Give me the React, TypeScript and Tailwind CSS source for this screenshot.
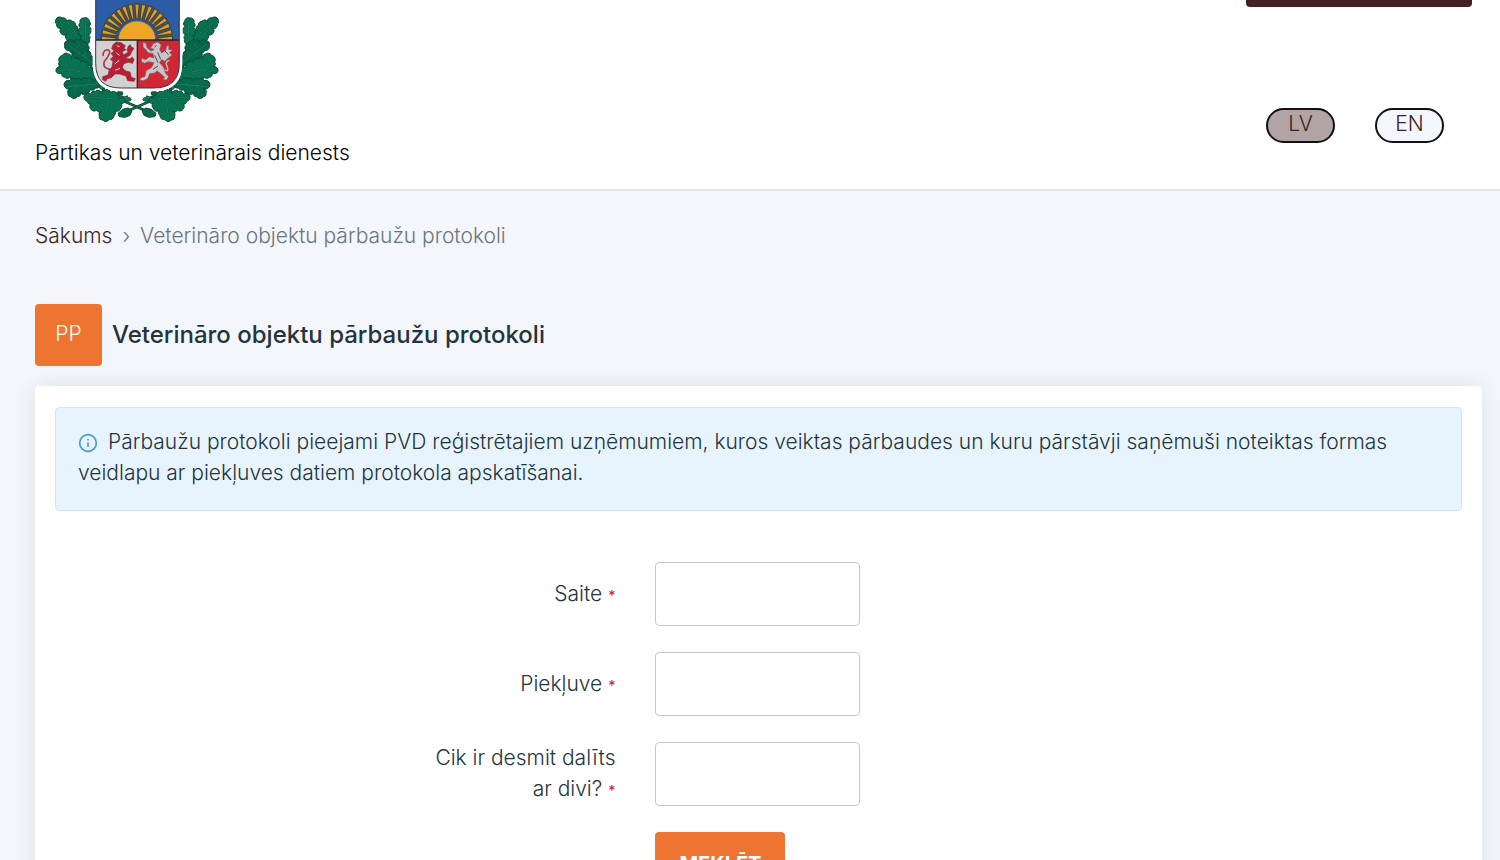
import { Info } from "lucide-react";

type Point = [number, number];

// Joins the notches of an oak leaf with outward bulging arcs
const leafPath = (points: Point[]) => {
  let d = `M${points[0][0]} ${points[0][1]}`;
  for (let i = 1; i <= points.length; i++) {
    const [x0, y0] = points[i - 1];
    const [x, y] = points[i % points.length];
    const r = Math.hypot(x - x0, y - y0) * 0.6;
    d += `A${r} ${r} 0 0 1 ${x} ${y}`;
  }
  return d + "Z";
};

const leaves: Point[][] = [
  [[50, 72], [48, 58], [66, 54], [80, 64], [96, 64], [106, 76], [112, 92], [126, 104], [132, 124], [110, 121], [92, 122], [78, 114], [80, 102], [62, 98], [64, 86]],
  [[120, 68], [132, 54], [148, 64], [146, 80], [152, 92], [144, 104], [148, 118], [140, 132], [126, 124], [126, 106], [116, 98], [122, 84]],
  [[74, 136], [84, 122], [102, 127], [116, 120], [130, 126], [144, 136], [142, 152], [152, 166], [158, 194], [138, 188], [122, 186], [110, 174], [98, 170], [100, 156], [88, 152]],
  [[48, 214], [62, 200], [58, 186], [68, 166], [84, 162], [94, 176], [108, 176], [122, 186], [134, 186], [144, 202], [158, 212], [166, 234], [148, 238], [132, 246], [116, 238], [100, 242], [92, 228], [74, 232], [66, 218]],
  [[72, 254], [90, 242], [108, 238], [124, 241], [140, 236], [158, 242], [180, 250], [166, 264], [150, 268], [138, 280], [122, 278], [112, 290], [92, 290], [84, 280], [92, 266]],
  [[134, 284], [152, 284], [166, 274], [184, 278], [196, 270], [212, 278], [228, 278], [238, 290], [256, 298], [242, 310], [242, 324], [224, 332], [222, 346], [208, 358], [188, 360], [178, 348], [186, 334], [170, 330], [152, 326], [154, 312], [142, 304]],
];

const leafFills = ["#08704f", "#087554", "#06664a", "#077451", "#086a4c", "#087351"];

const veins = [
  "M56 64L124 118M80 80L86 70M86 88L76 98M98 98L106 92",
  "M136 62L136 124M136 82L144 74M136 96L126 92",
  "M84 134L154 186M106 146L120 132M118 156L110 164M132 168L138 156",
  "M58 212Q100 202 160 228M82 208L76 180M104 208L108 190M92 208L82 220M126 214L132 198M116 212L118 229",
  "M82 260L172 252M105 258L116 248M110 259L102 280M138 256L148 248M134 258L130 268",
  "M146 292Q190 294 248 298M172 293L184 284M188 294L168 316M204 295L198 344M222 296L230 316",
];

const rays = Array.from({ length: 17 }, (_, i) => -88 + i * 11);

const WreathHalf = () => (
  <g>
    <path d="M137 115Q143 170 159 218Q178 278 246 301L344 344" fill="none" stroke="#0b4937" strokeWidth="8" strokeLinecap="round" />
    <path d="M137 115Q143 170 159 218Q178 278 246 301L344 344" fill="none" stroke="#1d7758" strokeWidth="3" />
    <path d="M306 332L318 324L334 328L348 340L344 350L326 352L312 346Z" fill="#086a4c" stroke="#0a4735" strokeWidth="3" strokeLinejoin="round" />
    {leaves.map((points, i) => (
      <g key={i}>
        <path d={leafPath(points)} fill={leafFills[i]} stroke="#0a4735" strokeWidth="3" />
        <path d={veins[i]} fill="none" stroke="#0b5541" strokeWidth="5" />
        <path d={veins[i]} fill="none" stroke="#1c9a70" strokeWidth="2" />
      </g>
    ))}
    <path d="M170 264L196 252M196 258L186 282M238 296L264 288M254 302L274 298" stroke="#0a5b43" strokeWidth="4" />
    <ellipse cx="184" cy="258" rx="6" ry="10" fill="#167954" stroke="#0a4735" strokeWidth="2" />
    <ellipse cx="240" cy="280" rx="9" ry="7" fill="#0b5f45" stroke="#0a4735" strokeWidth="2" />
    <ellipse cx="264" cy="298" rx="9" ry="6" fill="#167954" stroke="#0a4735" strokeWidth="2" />
  </g>
);

const Crest = () => (
  <svg viewBox="45 0 492 369" className="block w-[164px] h-[123px]" role="img" aria-label="Latvijas Republikas ģerbonis">
    <WreathHalf />
    <g transform="translate(582 0) scale(-1 1)">
      <WreathHalf />
    </g>

    {/* Shield */}
    <clipPath id="shield">
      <path d="M167 -10H418V190Q418 264 342 264H242Q167 264 167 190Z" />
    </clipPath>
    <path d="M158 -10H427V190Q427 274 342 274H242Q158 274 158 190Z" fill="#fff" />
    <g clipPath="url(#shield)">
      <rect x="160" y="-10" width="262" height="130" fill="#2b5ca8" />
      {rays.map((angle) => (
        <g key={angle} transform={`translate(291 119) rotate(${angle})`}>
          <path d="M-3 -62L-7 -107H7L3 -62Z" fill="#d99f28" stroke="#4a4530" strokeWidth="4" />
        </g>
      ))}
      <circle cx="291" cy="119" r="56" fill="#f0a625" stroke="#2b5ca8" strokeWidth="2" />
      <rect x="160" y="120" width="132" height="150" fill="#d2d0d1" />
      <rect x="292" y="120" width="130" height="150" fill="#d02636" />
      <path d="M160 120H422M292 120V270" stroke="#24232c" strokeWidth="4" />
    </g>
    <path d="M167 -10V190Q167 264 242 264H342Q418 264 418 190V-10" fill="none" stroke="#3a3540" strokeWidth="3" />

    {/* Lion */}
    <g fill="#b71f35" stroke="#8c2937" strokeWidth="2" strokeLinejoin="round">
      <path d="M212 208Q186 206 193 184Q204 173 209 158Q208 146 196 151Q187 158 190 168" fill="none" stroke="#b23b48" strokeWidth="5" />
      <path d="M219 134L229 126L243 128L256 137L252 145L258 149L246 155L251 165L264 157L261 150L265 138L271 134L274 141L282 145L276 153L271 165L256 175L270 177L277 171L282 179L278 190L265 187L251 191L247 203L257 213L270 216L274 232L286 236L282 244L263 242L258 228L239 222L225 222L214 233L202 236L197 244L188 239L188 230L204 225L207 212L216 201L219 184L211 178L220 169L213 160L223 153L215 146Z" />
      <path d="M230 137L239 140M229 159L239 166M224 192L238 181M225 211L240 205" fill="none" stroke="#ead4d5" strokeWidth="3" />
    </g>

    {/* Griffin */}
    <g fill="#c8c4c7" stroke="#725966" strokeWidth="2" strokeLinejoin="round">
      <path d="M365 205Q390 222 381 198Q373 186 388 181" fill="none" stroke="#c8c4c7" strokeWidth="4" />
      <path d="M331 145L341 130L354 126L364 135L359 148L365 159L378 150L379 139L387 136L386 148L397 150L389 158L397 165L388 172L374 184L365 179L359 188L371 202L376 218L386 230L380 240L369 239L374 232L363 222L352 213L342 220L329 221L324 235L311 242L299 241L303 233L315 229L318 212L334 203L342 188L325 185L313 190L303 184L306 175L317 179L328 170L342 174L339 161L324 158L316 147L309 141L309 127L318 130L321 143L333 153L343 148Z" />
      <path d="M349 136L344 142M353 157L362 178M344 166L354 188M375 153L385 164M339 208L354 198" fill="none" stroke="#594753" strokeWidth="3" />
    </g>
  </svg>
);

const fields = [
  { id: "saite", label: "Saite" },
  { id: "piekluve", label: "Piekļuve" },
  { id: "jautajums", label: "Cik ir desmit dalīts ar divi?" },
];

const App = () => {
  return (
    <div className="h-screen overflow-hidden bg-[#f3f6fb] font-['Inter',sans-serif] text-[21px] leading-[31px] font-light text-[#24343d]">
      <header className="flex justify-between border-b-2 border-[#e2e4e8] bg-white pb-[21px] pl-[35px] pr-7">
        <div>
          <div className="pl-5">
            <Crest />
          </div>
          <p className="mt-[14px] text-black">Pārtikas un veterinārais dienests</p>
        </div>
        <div className="flex flex-col items-end">
          <div className="h-[7px] w-[226px] rounded-b bg-[#411f23]" />
          <nav className="mt-[101px] mr-7 flex gap-10">
            <button className="h-[35px] w-[69px] rounded-full border-2 border-[#111] bg-[#b1a4a5] pb-1 leading-[27px] text-[#411f23]">LV</button>
            <button className="h-[35px] w-[69px] rounded-full border-2 border-[#111] bg-[#f3f6fb] pb-1 leading-[27px] text-[#411f23]">EN</button>
          </nav>
        </div>
      </header>

      <main className="pl-[35px] pr-[18px]">
        <nav className="mt-[29px] flex">
          <a href="#" className="text-[#411f23]">Sākums</a>
          <span className="mx-[10px] text-[#6c757d]">›</span>
          <span className="text-[#6c757d]">Veterināro objektu pārbaužu protokoli</span>
        </nav>

        <div className="mt-[53px] flex items-center gap-[10px]">
          <div className="flex h-[62px] w-[67px] items-center justify-center rounded bg-[#ed7431] pb-1 text-white">PP</div>
          <h1 className="text-2xl font-medium text-[#24343d]">Veterināro objektu pārbaužu protokoli</h1>
        </div>

        <section className="mt-5 rounded bg-white p-5 pt-[21px] shadow-[0_0_24px_rgba(0,0,0,0.09)]">
          <div className="rounded border border-[#d3e5ef] bg-[#e7f4fd] px-[22px] pt-[18px] pb-[22px]">
            <Info className="mr-[10px] inline-block size-5 align-[-4px] text-[#4a9ad4]" strokeWidth={2} />
            Pārbaužu protokoli pieejami PVD reģistrētajiem uzņēmumiem, kuros veiktas pārbaudes un kuru pārstāvji saņēmuši noteiktas formas veidlapu ar piekļuves datiem protokola apskatīšanai.
          </div>

          <form className="mt-[51px] grid grid-cols-[41fr_59fr] items-center gap-x-10 gap-y-[26px]">
            {fields.map((field) => (
              <div key={field.id} className="contents">
                <label htmlFor={field.id} className="max-w-[200px] justify-self-end pb-[2px] text-right">
                  {field.label} <span className="text-sm leading-none font-medium text-[#d9263a]">*</span>
                </label>
                <input id={field.id} type="text" className="h-16 w-[205px] rounded border border-[#c8c8c8] bg-white px-4" />
              </div>
            ))}
            <button type="submit" className="col-start-2 h-16 w-[130px] rounded bg-[#ed7431] text-xl font-bold text-white">MEKLĒT</button>
          </form>
        </section>
      </main>
    </div>
  );
};

export default App;
